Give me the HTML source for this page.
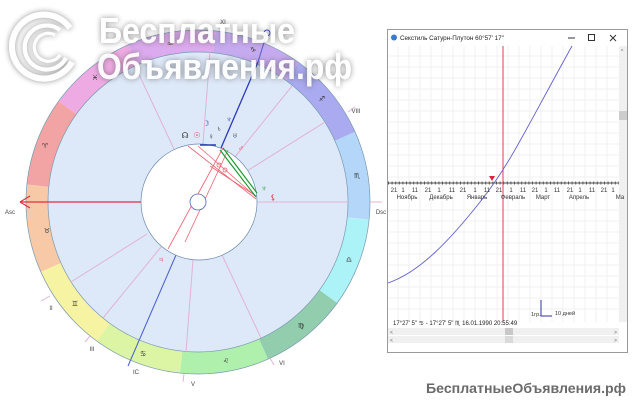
<!DOCTYPE html>
<html><head><meta charset="utf-8"><style>
html,body{margin:0;padding:0;background:#fff;width:640px;height:400px;overflow:hidden}
svg text{font-family:"Liberation Sans","DejaVu Sans",sans-serif}
.g{font-family:"DejaVu Sans",sans-serif}
</style></head><body>
<svg width="640" height="400" viewBox="0 0 640 400" xmlns="http://www.w3.org/2000/svg">
<defs>
<filter id="sh" x="-20%" y="-20%" width="140%" height="140%"><feDropShadow dx="0" dy="0" stdDeviation="3" flood-color="#555" flood-opacity="0.7"/></filter>
</defs>
<!-- zodiac ring -->
<g transform="translate(198,202) scale(-1,1)" fill="none" stroke-width="22">
<circle r="161" stroke="#f8c9a6" stroke-dasharray="84.3 1011.6" stroke-dashoffset="16.86"/>
<circle r="161" stroke="#f8c9a6" stroke-dasharray="84.3 1011.6" stroke-dashoffset="-994.7"/>
<circle r="161" stroke="#f6f3a2" stroke-dasharray="84.3 1011.6" stroke-dashoffset="-67.44"/>
<circle r="161" stroke="#dcf5a4" stroke-dasharray="84.3 1011.6" stroke-dashoffset="-151.7"/>
<circle r="161" stroke="#aef0ac" stroke-dasharray="84.3 1011.6" stroke-dashoffset="-236.0"/>
<circle r="161" stroke="#92cdad" stroke-dasharray="84.3 1011.6" stroke-dashoffset="-320.3"/>
<circle r="161" stroke="#acf3f8" stroke-dasharray="84.3 1011.6" stroke-dashoffset="-404.6"/>
<circle r="161" stroke="#b4d6f8" stroke-dasharray="84.3 1011.6" stroke-dashoffset="-489.0"/>
<circle r="161" stroke="#aaaaf0" stroke-dasharray="84.3 1011.6" stroke-dashoffset="-573.3"/>
<circle r="161" stroke="#c6aaf0" stroke-dasharray="84.3 1011.6" stroke-dashoffset="-657.6"/>
<circle r="161" stroke="#dcaaee" stroke-dasharray="84.3 1011.6" stroke-dashoffset="-741.9"/>
<circle r="161" stroke="#eeaae2" stroke-dasharray="84.3 1011.6" stroke-dashoffset="-826.2"/>
<circle r="161" stroke="#f2a4a4" stroke-dasharray="84.3 1011.6" stroke-dashoffset="-910.5"/>
</g>
<circle cx="198" cy="202" r="172" fill="none" stroke="#7a9ab0" stroke-width="0.7"/>
<circle cx="198" cy="202" r="150" fill="#dde8f8" stroke="#7a9ab0" stroke-width="0.7"/>
<!-- house cusps -->
<g stroke="#e0b4d4" stroke-width="1">
<line x1="147" y1="234" x2="71" y2="282"/><line x1="161" y1="247" x2="103" y2="318"/>
<line x1="193" y1="260" x2="186" y2="352"/><line x1="222" y1="255" x2="261" y2="338"/>
<line x1="257" y1="202" x2="348" y2="202"/><line x1="247" y1="171" x2="325" y2="122"/>
<line x1="235" y1="157" x2="292" y2="86"/><line x1="203" y1="144" x2="210" y2="52"/>
<line x1="174" y1="149" x2="135" y2="66"/>
<line x1="41" y1="301" x2="50" y2="296"/><line x1="90" y1="336" x2="85" y2="342"/>
<line x1="184" y1="374" x2="183" y2="382"/><line x1="270" y1="358" x2="274" y2="365"/>
<line x1="370" y1="202" x2="382" y2="202"/><line x1="348" y1="112" x2="355" y2="107"/>
</g>
<line x1="176" y1="255" x2="128" y2="366" stroke="#4a5ed0" stroke-width="1"/>
<line x1="221" y1="148" x2="258" y2="62" stroke="#2a3ab8" stroke-width="1.3"/>
<line x1="258" y1="62" x2="266" y2="36" stroke="#4a5ed0" stroke-width="1"/>
<circle cx="267" cy="33" r="3" fill="#fff" stroke="#3040c0"/>
<!-- inner -->
<circle cx="199" cy="202" r="58" fill="#fff" stroke="#6a88b0" stroke-width="0.7"/>
<line x1="20" y1="202" x2="141" y2="202" stroke="#e03040" stroke-width="1.2"/>
<path d="M20 202 L30 196 M20 202 L30 208" stroke="#e03040" stroke-width="1.2" fill="none"/>
<g stroke="#f06070" stroke-width="0.8" fill="none">
<line x1="188" y1="146" x2="256" y2="199"/><line x1="198" y1="146" x2="255" y2="196"/>
<line x1="168" y1="249" x2="223" y2="148"/><line x1="185" y1="242" x2="228" y2="150"/>
<line x1="210" y1="166" x2="256" y2="196"/>
<circle cx="219" cy="165" r="2"/><circle cx="225" cy="170" r="2"/>
</g>
<g stroke="#1a9a30" stroke-width="1.2"><line x1="220" y1="150" x2="256" y2="197"/><line x1="223" y1="148" x2="257" y2="193"/></g>
<line x1="200" y1="145" x2="216" y2="145" stroke="#2a3ab8" stroke-width="1.5"/>
<circle cx="198" cy="202" r="8" fill="#fff" stroke="#5060c0" stroke-width="0.8"/>
<!-- sign glyphs -->
<g class="g" font-size="7" fill="#333" text-anchor="middle">
<text x="47" y="233">♉</text><text x="75" y="306">♊</text><text x="143" y="356">♋</text>
<text x="226" y="363">♌</text><text x="301" y="328">♍</text><text x="349" y="262">♎</text>
<text x="357" y="178">♏</text><text x="322" y="101">♐</text><text x="253" y="52">♑</text>
<text x="170" y="46">♒</text><text x="95" y="80">♓</text><text x="45" y="148">♈</text>
</g>
<g class="g" font-size="8" text-anchor="middle">
<text x="185" y="138" fill="#333">☊</text><text x="197" y="138" fill="#e03040">☉</text>
<text x="206" y="126" fill="#2a3ab8">☽</text><text x="219" y="131" fill="#333">♄</text>
<text x="211" y="139" fill="#333">♀</text><text x="235" y="138" fill="#333">♅</text>
<text x="229" y="122" fill="#2a3ab8">♆</text><text x="241" y="151" fill="#e03040">♂</text>
<text x="264" y="191" fill="#1a9a30">♆</text><text x="273" y="200" fill="#e03040">⚸</text>
<text x="161" y="262" fill="#e03040">♃</text>
</g>
<g font-size="6" fill="#444" text-anchor="middle">
<text x="10" y="214">Asc</text><text x="381" y="214">Dsc</text><text x="51" y="310">II</text>
<text x="92" y="351">III</text><text x="136" y="374">IC</text><text x="193" y="386">V</text>
<text x="282" y="365">VI</text><text x="356" y="113">VIII</text><text x="223" y="24">XI</text>
</g>
<!-- window -->
<rect x="387.5" y="29.5" width="240" height="323" fill="#fff" stroke="#9a9a9a"/>
<circle cx="394" cy="37.5" r="3" fill="#3a7ad0"/>
<text x="400" y="40" font-size="6.3" fill="#222">Секстиль Сатурн-Плутон  60°57' 17"</text>
<line x1="568" y1="38" x2="575" y2="38" stroke="#333"/>
<rect x="588.5" y="34.5" width="6" height="6" fill="none" stroke="#333"/>
<path d="M610 35 L616 41 M616 35 L610 41" stroke="#333"/>
<g stroke="#f0f0f0" stroke-width="1">
<path d="M398 46V322M409 46V322M420 46V322M431 46V322M442 46V322M453 46V322M464 46V322M475 46V322M486 46V322M497 46V322M508 46V322M519 46V322M530 46V322M541 46V322M552 46V322M563 46V322M574 46V322M585 46V322M596 46V322M607 46V322"/>
<path d="M388 56H619M388 67H619M388 78H619M388 89H619M388 100H619M388 111H619M388 122H619M388 133H619M388 144H619M388 155H619M388 166H619M388 177H619M388 210H619M388 221H619M388 232H619M388 243H619M388 254H619M388 265H619M388 276H619M388 287H619M388 298H619M388 309H619"/>
</g>
<rect x="619" y="46" width="8" height="276" fill="#f0f0f0"/>
<rect x="619" y="111" width="8" height="9" fill="#cdcdcd"/>
<text x="621" y="53" font-size="5" fill="#666">^</text>
<line x1="388" y1="183" x2="619" y2="183" stroke="#555" stroke-width="1"/>
<line x1="388" y1="183" x2="619" y2="183" stroke="#555" stroke-width="3" stroke-dasharray="1 2.6"/>
<line x1="503" y1="46" x2="503" y2="322" stroke="#d84050" stroke-width="1"/>
<path d="M388 283 C420 272 450 240 480 202 S520 140 572 46" fill="none" stroke="#6060d0" stroke-width="0.9"/>
<path d="M489 176 L495 176 L492 181 Z" fill="#e02040"/>
<g font-size="6" fill="#333" text-anchor="middle">
<text x="394" y="192">21</text><text x="403" y="192">1</text><text x="415" y="192">11</text><text x="428" y="192">21</text>
<text x="439" y="192">1</text><text x="452" y="192">11</text><text x="463" y="192">21</text><text x="475" y="192">1</text>
<text x="487" y="192">11</text><text x="499" y="192">21</text><text x="511" y="192">1</text><text x="523" y="192">11</text>
<text x="535" y="192">21</text><text x="546" y="192">1</text><text x="557" y="192">11</text><text x="570" y="192">21</text>
<text x="580" y="192">1</text><text x="592" y="192">11</text><text x="604" y="192">21</text><text x="613" y="192">1</text>
<text x="407" y="199">Ноябрь</text><text x="441" y="199">Декабрь</text><text x="477" y="199">Январь</text>
<text x="513" y="199">Февраль</text><text x="543" y="199">Март</text><text x="579" y="199">Апрель</text><text x="620" y="199">Ма</text>
</g>
<path d="M541 300 V316 H552" fill="none" stroke="#3030a0" stroke-width="1"/>
<text x="531" y="316" font-size="5.5" fill="#333">1гр.</text>
<text x="555" y="315" font-size="5.5" fill="#333">10 дней</text>
<text x="393" y="325" font-size="6" fill="#222">17°27' 5" ♋ - 17°27' 5" ♏  16.01.1990 20:55:49</text>
<rect x="388" y="328" width="231" height="7" fill="#f0f0f0"/>
<rect x="388" y="336" width="231" height="7" fill="#f0f0f0"/>
<rect x="505" y="328" width="8" height="7" fill="#c8c8c8"/>
<rect x="505" y="336" width="8" height="7" fill="#dadada"/>
<text x="390" y="334" font-size="5" fill="#666">&lt;</text><text x="614" y="334" font-size="5" fill="#666">&gt;</text>
<text x="390" y="342" font-size="5" fill="#666">&lt;</text><text x="614" y="342" font-size="5" fill="#666">&gt;</text>
<!-- bottom watermark -->
<text x="426" y="393" font-size="14" font-weight="bold" fill="#6a6a6a" textLength="200" lengthAdjust="spacingAndGlyphs">БесплатныеОбъявления.рф</text>
<!-- top watermark -->
<g filter="url(#sh)" opacity="0.92">
<path d="M70 28 A32 32 0 1 0 72 62" fill="none" stroke="#fff" stroke-width="6"/>
<path d="M60 30 A22 22 0 1 0 66 58" fill="none" stroke="#fff" stroke-width="4"/>
<path d="M55 35 A14 14 0 1 0 60 55" fill="none" stroke="#fff" stroke-width="3"/>
<text x="99" y="43" font-size="36" font-weight="bold" fill="#fff" textLength="196" lengthAdjust="spacingAndGlyphs">Бесплатные</text>
<text x="97" y="79" font-size="36" font-weight="bold" fill="#fff" textLength="255" lengthAdjust="spacingAndGlyphs">Объявления.рф</text>
</g>
</svg>
</body></html>
